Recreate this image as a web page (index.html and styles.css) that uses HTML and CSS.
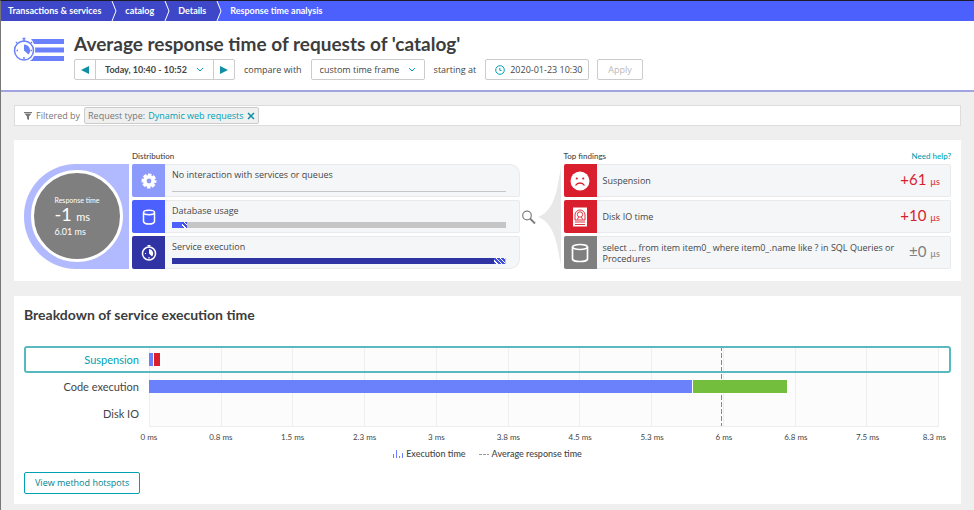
FILE: index.html
```html
<!DOCTYPE html>
<html lang="en">
<head>
<meta charset="utf-8">
<title>Response time analysis</title>
<link rel="stylesheet" href="styles.css">
</head>
<body>
<nav class="crumbs" aria-label="Breadcrumb">
  <a class="crumb" href="#">Transactions &amp; services</a>
  <svg class="crumb-sep" viewBox="0 0 8 20"><path d="M0 0H2L6 10L2 20H0Z" fill="#3d47c8"/><path d="M2 0L6 10L2 20" fill="none" stroke="#fff"/></svg>
  <a class="crumb" href="#">catalog</a>
  <svg class="crumb-sep" viewBox="0 0 8 20"><path d="M0 0H2L6 10L2 20H0Z" fill="#3d47c8"/><path d="M2 0L6 10L2 20" fill="none" stroke="#fff"/></svg>
  <a class="crumb" href="#">Details</a>
  <svg class="crumb-sep last" viewBox="0 0 8 20"><path d="M0 0H2L6 10L2 20H0Z" fill="#3d47c8"/><path d="M2 0L6 10L2 20" fill="none" stroke="#fff"/></svg>
  <a class="crumb current" href="#" aria-current="page">Response time analysis</a>
</nav>

<header class="header">
  <svg class="header-icon" viewBox="0 0 52 26">
    <g fill="#6b80fb"><path d="M18 2H51V7H21Q20 4 18 2ZM22 10.500H51V15.500H22Q22.500 13 22 10.500ZM21 19H51V24H17Q20 22 21 19Z"/></g>
    <circle cx="11" cy="13.500" r="9.500" fill="#fff" stroke="#6b80fb" stroke-width="1.500"/>
    <path d="M11 7.500V13.500L15.500 17.500A6 6 0 0 0 11 7.500Z" fill="#6b80fb"/>
    <path d="M11 4.500V1M9.500 1.500H12.500M3.500 13.500H5M11 20V22M17.500 13.500H19M4 6L3 5M18 6L19 5" stroke="#6b80fb" stroke-width="1.500"/>
  </svg>
  <div class="header-main">
    <h1>Average response time of requests of 'catalog'</h1>
    <form class="controls">
      <div class="stepper">
        <button type="button" aria-label="Previous time frame"><svg viewBox="0 0 8 8"><path d="M8 0V8L0 4Z"/></svg></button>
        <button type="button" class="range">Today, 10:40 - 10:52 <svg class="chevron" viewBox="0 0 8 5"><path d="M1 1L4 4L7 1"/></svg></button>
        <button type="button" aria-label="Next time frame"><svg viewBox="0 0 8 8"><path d="M0 0V8L8 4Z"/></svg></button>
      </div>
      <label for="compare">compare with</label>
      <div class="select">
        <select id="compare"><option>custom time frame</option></select>
        <svg class="chevron" viewBox="0 0 8 5"><path d="M1 1L4 4L7 1"/></svg>
      </div>
      <label for="start">starting at</label>
      <div class="date">
        <svg viewBox="0 0 10 10"><circle cx="5" cy="5" r="4.300"/><path d="M4.800 3V5.400H6.500"/></svg>
        <input id="start" type="text" value="2020-01-23 10:30">
      </div>
      <button type="button" class="apply" disabled>Apply</button>
    </form>
  </div>
</header>

<main>
  <section class="filter">
    <svg class="funnel" viewBox="0 0 8 8"><path d="M0 0H8V1H0ZM0.500 1.500H7.500L5 4.500V8L3 7V4.500Z" fill="#777"/></svg>
    <span>Filtered by</span>
    <span class="chip">Request type: <b>Dynamic web requests</b>
      <button type="button" aria-label="Remove filter"><svg viewBox="0 0 8 8"><path d="M1 1L7 7M7 1L1 7"/></svg></button>
    </span>
  </section>

  <section class="panel overview">
    <div class="gauge">
      <div class="disc">
        <div>
          <p class="disc-label">Response time</p>
          <p class="disc-value">-1 <small>ms</small></p>
          <p class="disc-total">6.01 ms</p>
        </div>
      </div>
    </div>
    <div class="column distribution">
      <div class="column-head"><h2>Distribution</h2></div>
      <div class="tile">
        <span class="icon light"><svg viewBox="0 0 16 16"><circle cx="8" cy="8" r="6" fill="#fff"/><circle cx="8" cy="8" r="6.200" fill="none" stroke="#fff" stroke-width="2.600" stroke-dasharray="3.400 1.470" stroke-dashoffset="1.700"/><circle cx="8" cy="8" r="2.400" fill="#8c9afc"/></svg></span>
        <div class="tile-body"><span>No interaction with services or queues</span><span class="meter thin"></span></div>
      </div>
      <div class="tile">
        <span class="icon blue"><svg viewBox="0 0 16 16"><path d="M2.500 3.500V12.500Q3 15 8 15Q13 15 13.500 12.500V3.500" fill="none" stroke="#fff" stroke-width="1.500"/><ellipse cx="8" cy="3.500" rx="5.500" ry="2.200" fill="none" stroke="#fff" stroke-width="1.500"/></svg></span>
        <div class="tile-body"><span>Database usage</span><span class="meter"><i class="fill bright" style="width:3%"></i><i class="hatch" style="width:1.5%"></i></span></div>
      </div>
      <div class="tile">
        <span class="icon dark"><svg viewBox="0 0 16 16"><circle cx="8" cy="8.500" r="6.500" fill="none" stroke="#fff" stroke-width="1.500"/><path d="M8 4V8.500L11 11.500A4.500 4.500 0 0 0 8 4Z" fill="#fff"/><path d="M8 2V0M6.500 .500H9.500M4 8.500H5M8 12V13.500" stroke="#fff" stroke-width="1.200"/></svg></span>
        <div class="tile-body"><span>Service execution</span><span class="meter"><i class="fill navy" style="width:96.500%"></i><i class="hatch" style="width:3.500%"></i></span></div>
      </div>
    </div>
    <div class="lens">
      <svg viewBox="0 0 44 105"><path d="M18 53Q33 48 38 20Q40 8 41 4V101Q40 97 38 86Q33 58 18 53Z" fill="#e8e8e8"/><circle cx="7" cy="51.500" r="4.300" fill="#fff" stroke="#808080" stroke-width="1.200"/><path d="M10 54.500L15 59.500" stroke="#808080" stroke-width="2"/></svg>
    </div>
    <div class="column findings">
      <div class="column-head"><h2>Top findings</h2><a href="#">Need help?</a></div>
      <div class="tile">
        <span class="icon red"><svg class="big" viewBox="0 0 20 20"><circle cx="10" cy="10" r="9.500" fill="#fff"/><circle cx="6.800" cy="7.500" r="1.100" fill="#d91e2e"/><circle cx="13.200" cy="7.500" r="1.100" fill="#d91e2e"/><path d="M5.500 14.500Q7 12 10 12Q13 12 14.500 14.500" fill="none" stroke="#d91e2e" stroke-width="1.300"/></svg></span>
        <p class="finding">Suspension</p><p class="delta bad">+61 <small>µs</small></p>
      </div>
      <div class="tile">
        <span class="icon red"><svg class="big" viewBox="0 0 20 20"><path d="M3 .500H17V19.500H3Z" fill="#fff"/><g fill="none" stroke="#d91e2e" stroke-width=".9"><path d="M5 13V8A5 5 0 0 1 15 8V13Z"/><circle cx="10" cy="7.500" r="2.700"/><path d="M8.500 10L7.500 12.500M11.500 10L12.500 12.500M5 15H15M5 17.500H15"/></g></svg></span>
        <p class="finding">Disk IO time</p><p class="delta bad">+10 <small>µs</small></p>
      </div>
      <div class="tile">
        <span class="icon gray"><svg class="big" viewBox="0 0 20 20"><path d="M2.500 4V16Q3 18.500 10 18.500Q17 18.500 17.500 16V4" fill="none" stroke="#fff" stroke-width="1.700"/><ellipse cx="10" cy="4" rx="7.500" ry="2.500" fill="none" stroke="#fff" stroke-width="1.700"/></svg></span>
        <p class="finding">select ... from item item0_ where item0_.name like ? in SQL Queries or Procedures</p><p class="delta">±0 <small>µs</small></p>
      </div>
    </div>
  </section>

  <section class="panel breakdown">
    <h2>Breakdown of service execution time</h2>
    <div class="chart">
      <div class="plot"><span class="average"></span></div>
      <div class="row selected"><span class="name">Suspension</span><span class="bars"><i class="bar blue" style="width:0.600%"></i><i class="bar red" style="width:0.900%"></i></span></div>
      <div class="row"><span class="name">Code execution</span><span class="bars"><i class="bar blue" style="width:68.800%"></i><i class="bar green" style="width:12.100%"></i></span></div>
      <div class="row"><span class="name">Disk IO</span><span class="bars"></span></div>
    </div>
    <div class="axis"><div class="ticks">
      <span>0 ms</span><span>0.8 ms</span><span>1.5 ms</span><span>2.3 ms</span><span>3 ms</span><span>3.8 ms</span><span>4.5 ms</span><span>5.3 ms</span><span>6 ms</span><span>6.8 ms</span><span>7.5 ms</span><span class="end">8.3 ms</span>
    </div></div>
    <div class="legend">
      <span><svg viewBox="0 0 10 8"><path d="M.500 4V8M3.500 0V8M6.500 6V8M9.500 3V8" stroke="#6b80fb"/></svg>Execution time</span>
      <span><svg viewBox="0 0 10 8"><path d="M0 4.500H10" stroke="#999" stroke-dasharray="3 1"/></svg>Average response time</span>
    </div>
    <button type="button" class="hotspots">View method hotspots</button>
  </section>
</main>
</body>
</html>
```

FILE: styles.css
```css
* { box-sizing: border-box; }
body {
  margin: 0;
  min-height: 100vh;
  background: #efefef;
  border-top: 1px solid #1c1c28;
  border-left: 1px solid #777;
  color: #454646;
  font: 9px/12px "Open Sans", "Noto Sans", sans-serif;
}
h1, h2, .crumbs, .range, .gauge, .column-head, .delta, .row, .ticks, .legend { font-family: Lato, "Noto Sans", sans-serif; }
h1, h2, p { margin: 0; }
button, input, select { font: inherit; color: inherit; margin: 0; padding: 0; border: 0; background: none; }
a { text-decoration: none; }
svg { display: block; flex: none; }

.crumbs { display: flex; height: 20px; background: #4b60fd; line-height: 20px; font-weight: 700; }
.crumb { color: #fff; background: #3d47c8; padding: 0 9px 0 7px; }
.crumb.current { background: none; }
.crumb-sep { width: 8px; height: 20px; background: #3d47c8; }
.crumb-sep.last { background: none; }

.header { display: flex; gap: 9px; padding: 12px 12px 10px; background: #fff; border-bottom: 2px solid #a0a4e0; }
.header-icon { width: 52px; height: 26px; margin-top: 4px; }
h1 { font-size: 19px; line-height: 22px; color: #3c3d3d; }
.controls { display: flex; align-items: center; margin-top: 4px; }
.controls label { margin: 0 9px; }
.stepper, .select, .date, .apply { display: flex; align-items: center; height: 21px; border: 1px solid #ccc; border-radius: 2px; background: #fff; }
.stepper button { display: flex; align-items: center; justify-content: center; gap: 9px; height: 19px; width: 20px; }
.stepper button > svg { width: 8px; height: 8px; fill: #0e8fa3; }
.stepper .range { width: 119px; font-family: Lato, "Noto Sans", sans-serif; font-weight: 700; border: solid #ccc; border-width: 0 1px; }
.stepper .range .chevron, .chevron { width: 8px; height: 5px; fill: none; stroke: #00a1b2; }
.select { width: 114px; padding: 0 8px; }
.select select { appearance: none; flex: 1; min-width: 0; }
.date { width: 104px; padding: 0 0 0 9px; gap: 5px; }
.date svg { width: 10px; height: 10px; fill: none; stroke: #00a1b2; }
.date input { flex: 1; min-width: 0; }
.apply { margin-left: 8px; padding: 0 10px; color: #b8b8b8; }

main { padding: 13px 13px 6px; }
.filter { display: flex; align-items: center; gap: 4px; height: 21px; padding: 0 9px; background: #fff; border: 1px solid #ddd; color: #777; }
.funnel { width: 8px; height: 8px; }
.chip { display: flex; align-items: center; gap: 3px; height: 17px; padding: 0 3px; background: #f0f0f0; border: 1px solid #ccc; border-radius: 2px; white-space: nowrap; }
.chip b { color: #00a1b2; font-weight: 400; }
.chip svg { width: 8px; height: 8px; stroke: #0e8fa3; stroke-width: 1.5; }
.panel { margin-top: 14px; padding: 11px 10px 10px; background: #fff; }

.overview { display: flex; align-items: flex-end; padding-bottom: 12px; }
.gauge { width: 105px; height: 105px; margin-right: 3px; padding: 6px 6px 6px 7px; background: #b1b9ff; border-radius: 52px 0 0 52px; }
.disc { display: flex; align-items: center; justify-content: center; width: 92px; height: 92px; border: 3px solid #fff; border-radius: 50%; background: #7f7f7f; color: #fff; }
.disc-label { font-size: 7px; line-height: 10px; }
.disc-value { font-size: 18px; line-height: 18px; font-weight: 400; }
.disc-value small { font-size: 11px; }
.disc-total { line-height: 11px; }
.column { display: flex; flex-direction: column; gap: 3px; flex: 1 1 0; min-width: 0; }
.column-head { display: flex; justify-content: space-between; font-size: 8px; line-height: 10px; font-weight: 500; }
.column-head h2 { font-size: 8px; font-weight: 500; }
.column-head a { color: #00a1b2; }
.tile { display: flex; height: 33px; background: #f5f6f8; border: solid #e8eaec; border-width: 1px 1px 1px 0; border-radius: 2px; }
.distribution .tile:nth-child(2) { border-top-right-radius: 10px; }
.distribution .tile:nth-child(4) { border-bottom-right-radius: 10px; }
.icon { display: flex; align-items: center; justify-content: center; flex: none; width: 33px; margin: -1px 0; border-radius: 2px 0 0 2px; }
.icon svg { width: 16px; height: 16px; }
.icon .big { width: 20px; height: 20px; }
.icon.light { background: #8c9afc; }
.icon.blue { background: #4b60fd; }
.icon.dark { background: #3033a3; }
.icon.red { background: #d91e2e; }
.icon.gray { background: #7f7f7f; }
.tile-body { flex: 1; display: flex; flex-direction: column; justify-content: space-between; padding: 4px 13px 4px 7px; }
.meter { display: flex; height: 6px; background: #c5c5c5; }
.meter.thin { height: 1px; }
.fill.bright { background: #4b60fd; }
.fill.navy { background: #3033a3; }
.hatch { background: repeating-linear-gradient(45deg, #4550d8 0 2px, #fff 2px 3px); }
.lens { width: 44px; }
.lens svg { width: 44px; height: 105px; }
.finding { flex: 1; align-self: center; padding: 0 6px; line-height: 11px; }
.delta { align-self: center; padding-right: 10px; font-size: 15px; line-height: 20px; font-weight: 400; color: #7f7f7f; white-space: nowrap; }
.delta small { font-size: 9px; }
.delta.bad { color: #d91e2e; }

.breakdown { margin-top: 15px; }
.breakdown > h2 { font-size: 14px; line-height: 16px; color: #3c3d3d; }
.chart { position: relative; margin-top: 23px; }
.plot { position: absolute; inset: 0 12px 0 125px; border: solid #eee; border-width: 0 1px 1px 0; background: repeating-linear-gradient(to right, #eee 0 1px, #fcfcfc 1px 9.0909%); }
.average { position: absolute; inset: 0 auto 0 72.500%; width: 1px; background: repeating-linear-gradient(#888 0 5px, transparent 5px 7px); }
.row { position: relative; display: flex; align-items: center; height: 27px; padding-right: 12px; font-size: 11px; }
.row.selected { box-shadow: inset 0 0 0 2px #5ab8c0; border-radius: 3px; color: #00a1b2; }
.name { width: 125px; padding-right: 10px; text-align: right; }
.bars { display: flex; flex: 1; height: 13px; }
.bar { border-right: 1px solid #fff; }
.bar.blue { background: #6b80fb; }
.bar.red { background: #d91e2e; }
.bar.green { background: #73be3d; }
.axis { padding: 5px 12px 0 125px; }
.ticks { display: flex; margin: 0 -7px 0 -36px; font-size: 8px; line-height: 10px; text-align: center; white-space: nowrap; }
.ticks span { flex: 0 0 8.630%; }
.ticks .end { flex: 1; text-align: right; }
.legend { display: flex; justify-content: center; gap: 13px; margin-top: 6px; font-weight: 500; }
.legend span { display: flex; align-items: center; gap: 3px; }
.legend svg { width: 10px; height: 8px; }
.hotspots { display: block; height: 22px; margin-top: 12px; padding: 0 10px; border: 1px solid #00a1b2; border-radius: 2px; color: #00848e; }
```
